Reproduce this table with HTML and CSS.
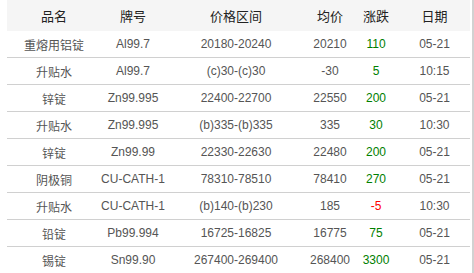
FILE: index.html
```html
<!DOCTYPE html>
<html lang="zh">
<head>
<meta charset="utf-8">
<link rel="stylesheet" href="styles.css">
</head>
<body>
<div class="wrap">
  <table class="price-table">
    <colgroup>
      <col class="c1"><col class="c2"><col class="c3"><col class="c4"><col class="c5"><col class="c6">
    </colgroup>
    <thead>
      <tr><th>品名</th><th>牌号</th><th>价格区间</th><th>均价</th><th>涨跌</th><th>日期</th></tr>
    </thead>
    <tbody>
      <tr><td>重熔用铝锭</td><td>Al99.7</td><td>20180-20240</td><td>20210</td><td class="up">110</td><td>05-21</td></tr>
      <tr><td>升贴水</td><td>Al99.7</td><td>(c)30-(c)30</td><td>-30</td><td class="up">5</td><td>10:15</td></tr>
      <tr><td>锌锭</td><td>Zn99.995</td><td>22400-22700</td><td>22550</td><td class="up">200</td><td>05-21</td></tr>
      <tr><td>升贴水</td><td>Zn99.995</td><td>(b)335-(b)335</td><td>335</td><td class="up">30</td><td>10:30</td></tr>
      <tr><td>锌锭</td><td>Zn99.99</td><td>22330-22630</td><td>22480</td><td class="up">200</td><td>05-21</td></tr>
      <tr><td>阴极铜</td><td>CU-CATH-1</td><td>78310-78510</td><td>78410</td><td class="up">270</td><td>05-21</td></tr>
      <tr><td>升贴水</td><td>CU-CATH-1</td><td>(b)140-(b)230</td><td>185</td><td class="down">-5</td><td>10:30</td></tr>
      <tr><td>铅锭</td><td>Pb99.994</td><td>16725-16825</td><td>16775</td><td class="up">75</td><td>05-21</td></tr>
      <tr><td>锡锭</td><td>Sn99.90</td><td>267400-269400</td><td>268400</td><td class="up">3300</td><td>05-21</td></tr>
    </tbody>
  </table>
  <div class="track"></div>
</div>
</body>
</html>
```
FILE: styles.css
```css
html, body {
  margin: 0;
  padding: 0;
  background: #fff;
}
body {
  font-family: "Liberation Sans", Arial, "Noto Sans CJK SC", sans-serif;
  overflow: hidden;
}
.wrap {
  display: flex;
  padding-left: 7px;
  height: 273px;
}
.price-table {
  width: 463px;
  border-collapse: collapse;
  table-layout: fixed;
  flex: none;
  align-self: flex-start;
}
.c1 { width: 94px; }
.c2 { width: 64px; }
.c3 { width: 142px; }
.c4 { width: 46px; }
.c5 { width: 46px; }
.c6 { width: 71px; }
.price-table th {
  height: 31px;
  padding: 0;
  background: #f5f5f5;
  color: #222;
  font-size: 13px;
  font-weight: normal;
  text-align: center;
}
.price-table td {
  height: 26px;
  padding: 0;
  border-bottom: 1px solid #d0d0d0;
  color: #555;
  font-size: 12px;
  text-align: center;
  white-space: nowrap;
}
.price-table td.up { color: #008000; }
.price-table td.down { color: #ff0000; }
.track {
  width: 2px;
  margin-left: 2px;
  background: #d2d2d2;
  flex: none;
}
```
